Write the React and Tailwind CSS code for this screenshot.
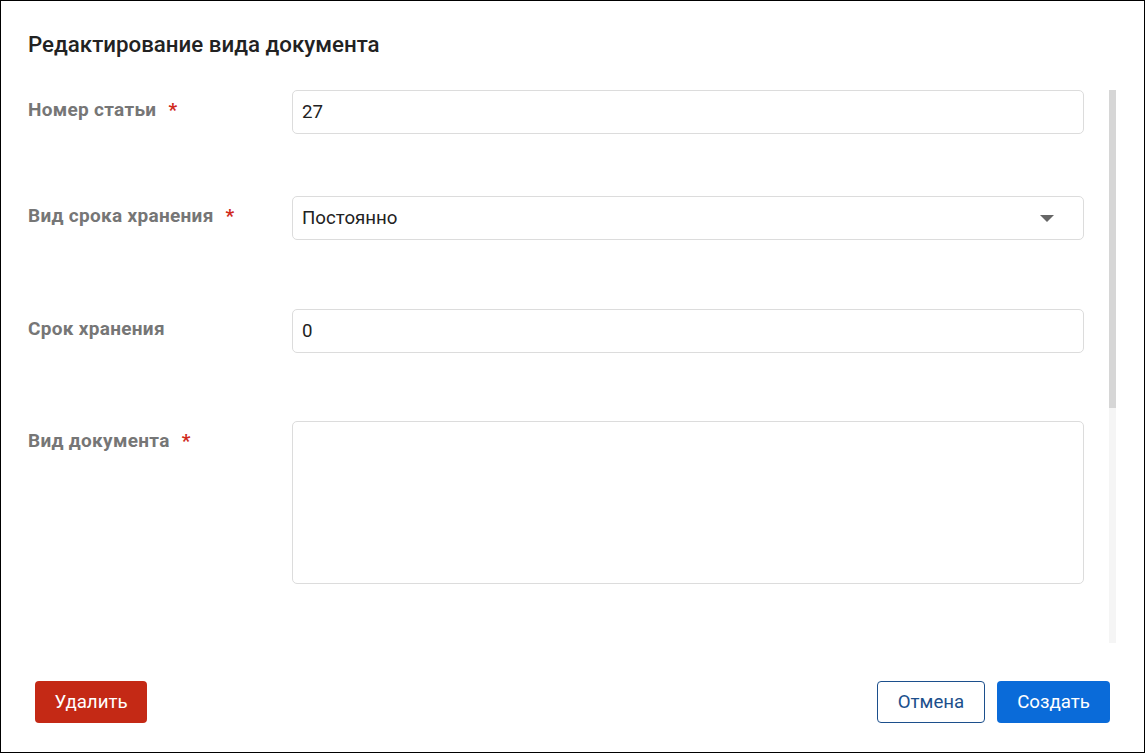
import React from "react";

function Label({ children, required }) {
  return (
    <div className="w-[264px] shrink-0 pt-[8px] text-[19px] leading-[23px] font-bold tracking-[0.3px] text-[#767676]">
      {children}
      {required && <span className="ml-[12px] text-[#d02a1c]">*</span>}
    </div>
  );
}

function TextBox({ value }) {
  return (
    <div className="flex-1 h-[44px] border border-[#dcdcdc] rounded-[5px] flex items-center pl-[9px] text-[18.7px] text-[#222]">
      {value}
    </div>
  );
}

export default function App() {
  return (
    <div className="w-[1145px] h-[753px] border border-black bg-white flex flex-col font-['Roboto',sans-serif]">
      <div className="h-[89px] pt-[29px] pl-[27px]">
        <h1 className="text-[22.3px] leading-[28px] font-medium text-[#222]">
          Редактирование вида документа
        </h1>
      </div>

      <div className="flex h-[553px]">
        <div className="flex-1 pl-[27px] pr-[25px] flex flex-col">
          <div className="flex">
            <Label required>Номер статьи</Label>
            <TextBox value="27" />
          </div>

          <div className="flex mt-[62px]">
            <Label required>Вид срока хранения</Label>
            <div className="flex-1 h-[44px] border border-[#dcdcdc] rounded-[5px] flex items-center justify-between pl-[9px] pr-[29px] text-[18.7px] text-[#222]">
              <span>Постоянно</span>
              <svg width="14" height="7" viewBox="0 0 14 7">
                <path d="M0 0 H14 L7 7 Z" fill="#666" />
              </svg>
            </div>
          </div>

          <div className="flex mt-[69px]">
            <Label>Срок хранения</Label>
            <TextBox value="0" />
          </div>

          <div className="flex mt-[68px]">
            <Label required>Вид документа</Label>
            <div className="flex-1 h-[163px] border border-[#dcdcdc] rounded-[5px]" />
          </div>
        </div>

        <div className="w-[7px] mr-[28px] bg-[#f5f5f5] flex flex-col">
          <div className="h-[318px] bg-[#d6d6d6]" />
        </div>
      </div>

      <div className="flex-1 flex items-start justify-between pt-[38px] pl-[34px] pr-[34px]">
        <button className="h-[42px] w-[112px] rounded-[4px] bg-[#c42915] text-white text-[18.7px]">
          Удалить
        </button>
        <div className="flex gap-[12px]">
          <button className="h-[42px] w-[108px] rounded-[4px] border border-[#1c4f8c] bg-white text-[#1c4f8c] text-[18.7px]">
            Отмена
          </button>
          <button className="h-[42px] w-[113px] rounded-[4px] bg-[#0a6bd9] text-white text-[18.7px]">
            Создать
          </button>
        </div>
      </div>
    </div>
  );
}
